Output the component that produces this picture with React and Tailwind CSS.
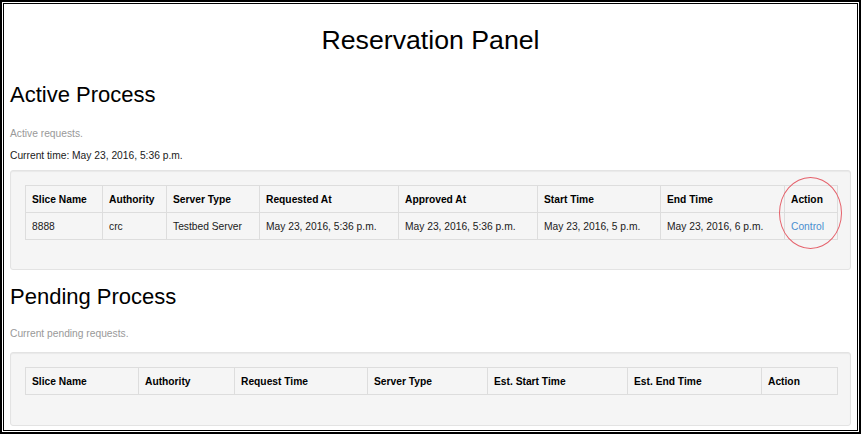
import React from 'react';

const activeCols = [
  { label: 'Slice Name', w: 'w-[77px]' },
  { label: 'Authority', w: 'w-[64px]' },
  { label: 'Server Type', w: 'w-[93px]' },
  { label: 'Requested At', w: 'w-[139px]' },
  { label: 'Approved At', w: 'w-[139px]' },
  { label: 'Start Time', w: 'w-[123px]' },
  { label: 'End Time', w: 'w-[124px]' },
  { label: 'Action', w: 'w-[53px]' },
];

const activeRows = [
  {
    slice: '8888',
    authority: 'crc',
    server: 'Testbed Server',
    requested: 'May 23, 2016, 5:36 p.m.',
    approved: 'May 23, 2016, 5:36 p.m.',
    start: 'May 23, 2016, 5 p.m.',
    end: 'May 23, 2016, 6 p.m.',
  },
];

const pendingCols = [
  { label: 'Slice Name', w: 'w-[113px]' },
  { label: 'Authority', w: 'w-[96px]' },
  { label: 'Request Time', w: 'w-[133px]' },
  { label: 'Server Type', w: 'w-[120px]' },
  { label: 'Est. Start Time', w: 'w-[140px]' },
  { label: 'Est. End Time', w: 'w-[134px]' },
  { label: 'Action', w: 'w-[76px]' },
];

const cell = 'border border-[#dddddd] h-[27px] px-[6px] py-0 text-left align-middle whitespace-nowrap';

const Well = ({ children }) => (
  <div className="bg-[#f5f5f5] border border-[#e3e3e3] rounded-[3px] shadow-[inset_0_1px_1px_rgba(0,0,0,0.05)] p-[14px]">
    {children}
  </div>
);

const App = () => {
  return (
    <div
      className="relative w-[861px] h-[434px] bg-white border-2 border-black p-px text-[#1a1a1a]"
      style={{ fontFamily: '"Liberation Sans", Arial, sans-serif' }}
    >
      <div className="h-full border border-black px-[6px] overflow-hidden">
        {/* Title */}
        <h1 className="mt-[21px] text-center text-[26.7px] leading-[30px] text-black">Reservation Panel</h1>

        {/* Active Process */}
        <h2 className="mt-[27px] text-[22px] leading-[25px] text-black">Active Process</h2>
        <p className="mt-[19px] text-[10.25px] leading-[15px] text-[#999999]">Active requests.</p>
        <p className="mt-[7px] text-[10.25px] leading-[15px] text-[#1a1a1a]">Current time: May 23, 2016, 5:36 p.m.</p>

        <div className="mt-[7px]">
          <Well>
            <table className="table-fixed border-collapse w-[812px] mb-[15px] text-[10.25px] leading-[15px]">
              <thead>
                <tr>
                  {activeCols.map((c) => (
                    <th key={c.label} className={`${cell} ${c.w} font-bold text-black`}>
                      {c.label}
                    </th>
                  ))}
                </tr>
              </thead>
              <tbody>
                {activeRows.map((r) => (
                  <tr key={r.slice}>
                    <td className={cell}>{r.slice}</td>
                    <td className={cell}>{r.authority}</td>
                    <td className={cell}>{r.server}</td>
                    <td className={cell}>{r.requested}</td>
                    <td className={cell}>{r.approved}</td>
                    <td className={cell}>{r.start}</td>
                    <td className={cell}>{r.end}</td>
                    <td className={cell}>
                      <a href="#" className="text-[#4a8fcf]">Control</a>
                    </td>
                  </tr>
                ))}
              </tbody>
            </table>
          </Well>
        </div>

        {/* Pending Process */}
        <h2 className="mt-[14px] text-[22px] leading-[25px] text-black">Pending Process</h2>
        <p className="mt-[17px] text-[10.25px] leading-[15px] text-[#999999]">Current pending requests.</p>

        <div className="mt-[11px]">
          <Well>
            <table className="table-fixed border-collapse w-[812px] mb-[16px] text-[10.25px] leading-[15px]">
              <thead>
                <tr>
                  {pendingCols.map((c) => (
                    <th key={c.label} className={`${cell} ${c.w} font-bold text-black`}>
                      {c.label}
                    </th>
                  ))}
                </tr>
              </thead>
              <tbody></tbody>
            </table>
          </Well>
        </div>
      </div>

      {/* annotation circle around Action column */}
      <div className="absolute left-[777px] top-[175px] w-[63px] h-[72px] rounded-[50%] border border-[#e5606a] pointer-events-none"></div>
    </div>
  );
};

export default App;
